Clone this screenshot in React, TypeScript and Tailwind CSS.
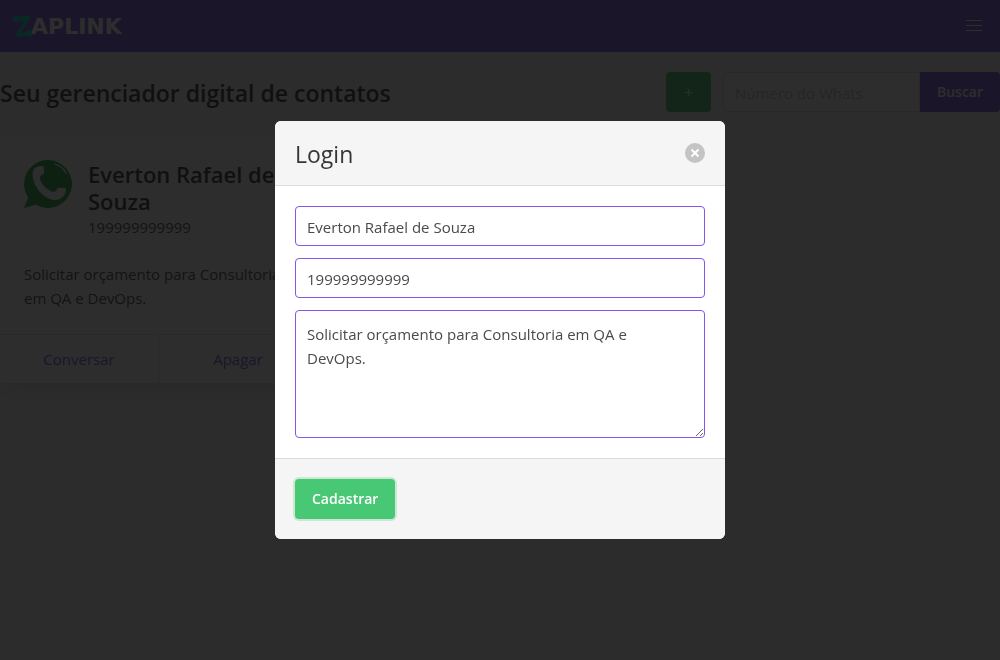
import React from "react";

function WhatsIcon() {
  return (
    <svg viewBox="0 0 48 48" className="h-12 w-12 shrink-0" aria-hidden="true">
      <path
        fill="#25a244"
        d="M24 0a24 24 0 1 1-12 44.800L0 48l4.200-10.500A24 24 0 0 1 24 0Z"
      />
      <path
        fill="#fff"
        d="M8.500 14c0-5 3.500-8 9-8 1.500 0 2.200.6 2.300 2l.2 4.500c0 1.300-.5 1.800-1.600 2.200-2 .7-2.800 2-2.300 4.300 1 5 6.500 10.500 11.900 12.500 2.500.8 4.200 0 5-2.200.5-1.300 1.200-1.700 2.500-1.600l5 .3c1.300.1 1.700.8 1.500 2.200C41.300 36 37 40 31 40 19.500 39.500 8.500 26 8.500 14Z"
      />
      <path
        fill="none"
        stroke="#fff"
        strokeWidth="1.300"
        strokeLinecap="round"
        d="M31 4.200c5 1.500 9 5 11 9"
      />
    </svg>
  );
}

function Logo() {
  return (
    <a href="#inicio" className="flex h-7 items-center" aria-label="Zaplink">
      <svg viewBox="0 0 21 24" className="h-6 w-[21px] shrink-0" aria-hidden="true">
        <g fill="#04d3c0">
          <circle cx="4" cy="4.500" r="3.400" />
          <circle cx="17.500" cy="19.500" r="3.400" />
          <path d="M3.500 1.500c2 1 4 .5 6.500.5h8.500l-1.500 4.500L9.500 18c3 .3 5-.5 8-1l1.500 5.500c-4-.5-8 .5-15 .3l1-4.300L11.500 7.500C9 7 7 7 4 7.700Z" />
        </g>
      </svg>
      <span className="-ml-0.5 pt-0.5 font-['DejaVu_Sans'] text-[22px] leading-7 font-bold text-white">
        APLINK
      </span>
    </a>
  );
}

const field =
  "block w-full rounded border border-[#8257e5] bg-white pl-[11px] text-[15px] text-[#4a4a4a] outline-none";

export default function App() {
  return (
    <div className="min-h-screen bg-[#f5f5f5] font-['Open_Sans','Noto_Sans',sans-serif] text-[15px] leading-6 text-[#4a4a4a]">
      <header className="flex h-13 items-center justify-between bg-[#8257e5] pl-3">
        <Logo />
        <button
          type="button"
          aria-label="Menu"
          className="flex h-13 w-13 flex-col items-center justify-center gap-1 pb-0.5 text-white"
        >
          <span className="h-px w-4 bg-current" />
          <span className="h-px w-4 bg-current" />
          <span className="h-px w-4 bg-current" />
        </button>
      </header>

      <main className="pt-5">
        <div className="flex items-center justify-between">
          <h1 className="pt-0.5 text-[23px] leading-7 font-semibold text-[#363636]">
            Seu gerenciador digital de contatos
          </h1>
          <div className="flex gap-3">
            <button
              type="button"
              aria-label="Adicionar contato"
              className="h-10 w-[45px] rounded bg-[#48c774] text-white"
            >
              +
            </button>
            <form className="flex" onSubmit={(e) => e.preventDefault()}>
              <input
                type="text"
                aria-label="Número do Whats"
                placeholder="Número do Whats"
                className="h-10 w-[197px] rounded-l border border-[#dbdbdb] bg-white px-[11px] pt-0.5 placeholder:text-[#c4c4c4]"
              />
              <button
                type="submit"
                className="h-10 w-20 rounded-r bg-[#8257e5] text-sm font-semibold text-white"
              >
                Buscar
              </button>
            </form>
          </div>
        </div>

        <article className="mt-6 w-[317px] bg-white shadow-[0_8px_16px_-2px_rgba(10,10,10,0.1),0_0_0_1px_rgba(10,10,10,0.02)]">
          <div className="p-6">
            <div className="flex gap-4">
              <WhatsIcon />
              <div className="pt-px">
                <h2 className="text-[22px] leading-[27px] font-semibold text-[#363636]">
                  Everton Rafael de Souza
                </h2>
                <p>199999999999</p>
              </div>
            </div>
            <p className="mt-[23px]">
              Solicitar orçamento para Consultoria em QA e DevOps.
            </p>
          </div>
          <footer className="flex border-t border-[#e4e4e4] text-center text-[#8257e5]">
            <a href="#conversar" className="flex-1 border-r border-[#e4e4e4] p-3">
              Conversar
            </a>
            <a href="#apagar" className="flex-1 p-3">
              Apagar
            </a>
          </footer>
        </article>
      </main>

      <div className="fixed inset-0 flex items-center justify-center bg-[#0a0a0a]/86">
        <form
          role="dialog"
          aria-modal="true"
          aria-labelledby="login-title"
          onSubmit={(e) => e.preventDefault()}
          className="w-[450px] max-w-full overflow-hidden rounded-md bg-white"
        >
          <header className="flex items-center justify-between border-b border-[#dbdbdb] bg-[#f5f5f5] p-5">
            <h2 id="login-title" className="pt-0.5 text-[23px] leading-[22px] text-[#363636]">
              Login
            </h2>
            <button
              type="button"
              aria-label="Fechar"
              className="flex h-5 w-5 items-center justify-center rounded-full bg-[#c4c4c4]"
            >
              <svg viewBox="0 0 10 10" className="h-2.5 w-2.5" aria-hidden="true">
                <path d="M1.500 1.500l7 7M8.500 1.500l-7 7" stroke="#fff" strokeWidth="2" />
              </svg>
            </button>
          </header>
          <div className="flex flex-col gap-3 p-5">
            <input
              type="text"
              aria-label="Nome"
              defaultValue="Everton Rafael de Souza"
              className={`${field} h-10 pt-0.5 pr-[11px]`}
            />
            <input
              type="text"
              aria-label="Número"
              defaultValue="199999999999"
              className={`${field} h-10 pt-0.5 pr-[11px]`}
            />
            <textarea
              aria-label="Assunto"
              defaultValue="Solicitar orçamento para Consultoria em QA e DevOps."
              className={`${field} h-32 resize-y py-[11px] pr-7 leading-6`}
            />
          </div>
          <footer className="border-t border-[#dbdbdb] bg-[#f5f5f5] p-5">
            <button
              type="submit"
              className="block h-10 rounded bg-[#48c774] px-[17px] text-sm font-semibold text-white ring-2 ring-[#48c774]/25"
            >
              Cadastrar
            </button>
          </footer>
        </form>
      </div>
    </div>
  );
}
